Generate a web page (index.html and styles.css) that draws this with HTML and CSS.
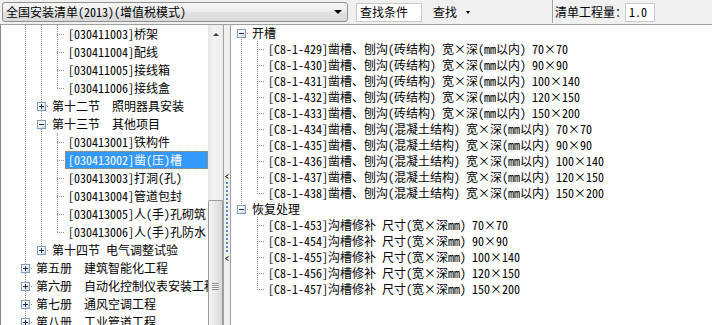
FILE: index.html
```html
<!DOCTYPE html>
<html lang="zh-CN">
<head>
  <meta charset="UTF-8">
  <title>清单</title>
  <link rel="stylesheet" href="styles.css">
</head>
<body>
  <div class="toolbar">
    <div class="combo">
      <span class="combo-text">全国安装清单(2013)(增值税模式)</span>
      <span class="down"></span>
    </div>
    <div class="search">查找条件</div>
    <div class="find">查找<span class="down small"></span></div>
    <div class="sep"></div>
    <div class="qty">
      <span class="qty-label">清单工程量：</span>
      <span class="qty-box">1.0</span>
    </div>
  </div>

  <div class="main">
    <div class="left">
      <div class="tree tall">
        <div class="row"><span class="c v"></span><span class="c v"></span><span class="c t"></span><span class="lbl">[030411003]桥架</span></div>
        <div class="row"><span class="c v"></span><span class="c v"></span><span class="c t"></span><span class="lbl">[030411004]配线</span></div>
        <div class="row"><span class="c v"></span><span class="c v"></span><span class="c t"></span><span class="lbl">[030411005]接线箱</span></div>
        <div class="row"><span class="c v"></span><span class="c v"></span><span class="c l"></span><span class="lbl">[030411006]接线盒</span></div>
        <div class="row"><span class="c v"></span><span class="c t"><i class="box plus"></i></span><span class="lbl">第十二节　照明器具安装</span></div>
        <div class="row"><span class="c v"></span><span class="c t"><i class="box"></i></span><span class="lbl">第十三节　其他项目</span></div>
        <div class="row"><span class="c v"></span><span class="c v"></span><span class="c t"></span><span class="lbl">[030413001]铁构件</span></div>
        <div class="row"><span class="c v"></span><span class="c v"></span><span class="c t"></span><span class="lbl sel">[030413002]凿(压)槽</span></div>
        <div class="row"><span class="c v"></span><span class="c v"></span><span class="c t"></span><span class="lbl">[030413003]打洞(孔)</span></div>
        <div class="row"><span class="c v"></span><span class="c v"></span><span class="c t"></span><span class="lbl">[030413004]管道包封</span></div>
        <div class="row"><span class="c v"></span><span class="c v"></span><span class="c t"></span><span class="lbl">[030413005]人(手)孔砌筑</span></div>
        <div class="row"><span class="c v"></span><span class="c v"></span><span class="c l"></span><span class="lbl">[030413006]人(手)孔防水</span></div>
        <div class="row"><span class="c v"></span><span class="c l"><i class="box plus"></i></span><span class="lbl">第十四节 电气调整试验</span></div>
        <div class="row"><span class="c t"><i class="box plus"></i></span><span class="lbl">第五册　建筑智能化工程</span></div>
        <div class="row"><span class="c t"><i class="box plus"></i></span><span class="lbl">第六册　自动化控制仪表安装工程</span></div>
        <div class="row"><span class="c t"><i class="box plus"></i></span><span class="lbl">第七册　通风空调工程</span></div>
        <div class="row"><span class="c t"><i class="box plus"></i></span><span class="lbl">第八册　工业管道工程</span></div>
      </div>
      <div class="vscroll">
        <div class="sbtn"><span class="up"></span></div>
        <div class="thumb"><span class="grip"></span></div>
      </div>
    </div>

    <div class="splitter">
      <svg class="chev" width="4" height="5" viewBox="0 0 4 5"><path d="M3.5 0.5 L0.5 2.5 L3.5 4.5" fill="none" stroke="#000" stroke-width="1"/></svg>
      <div class="grab"></div>
      <svg class="chev" width="4" height="5" viewBox="0 0 4 5"><path d="M3.5 0.5 L0.5 2.5 L3.5 4.5" fill="none" stroke="#000" stroke-width="1"/></svg>
    </div>

    <div class="right">
      <div class="tree short">
        <div class="row"><span class="c f"><i class="box"></i></span><span class="lbl">开槽</span></div>
        <div class="row"><span class="c v"></span><span class="c t"></span><span class="lbl">[C8-1-429]凿槽、刨沟(砖结构) 宽<b class="x">×</b>深(mm以内) 70<b class="x">×</b>70</span></div>
        <div class="row"><span class="c v"></span><span class="c t"></span><span class="lbl">[C8-1-430]凿槽、刨沟(砖结构) 宽<b class="x">×</b>深(mm以内) 90<b class="x">×</b>90</span></div>
        <div class="row"><span class="c v"></span><span class="c t"></span><span class="lbl">[C8-1-431]凿槽、刨沟(砖结构) 宽<b class="x">×</b>深(mm以内) 100<b class="x">×</b>140</span></div>
        <div class="row"><span class="c v"></span><span class="c t"></span><span class="lbl">[C8-1-432]凿槽、刨沟(砖结构) 宽<b class="x">×</b>深(mm以内) 120<b class="x">×</b>150</span></div>
        <div class="row"><span class="c v"></span><span class="c t"></span><span class="lbl">[C8-1-433]凿槽、刨沟(砖结构) 宽<b class="x">×</b>深(mm以内) 150<b class="x">×</b>200</span></div>
        <div class="row"><span class="c v"></span><span class="c t"></span><span class="lbl">[C8-1-434]凿槽、刨沟(混凝土结构) 宽<b class="x">×</b>深(mm以内) 70<b class="x">×</b>70</span></div>
        <div class="row"><span class="c v"></span><span class="c t"></span><span class="lbl">[C8-1-435]凿槽、刨沟(混凝土结构) 宽<b class="x">×</b>深(mm以内) 90<b class="x">×</b>90</span></div>
        <div class="row"><span class="c v"></span><span class="c t"></span><span class="lbl">[C8-1-436]凿槽、刨沟(混凝土结构) 宽<b class="x">×</b>深(mm以内) 100<b class="x">×</b>140</span></div>
        <div class="row"><span class="c v"></span><span class="c t"></span><span class="lbl">[C8-1-437]凿槽、刨沟(混凝土结构) 宽<b class="x">×</b>深(mm以内) 120<b class="x">×</b>150</span></div>
        <div class="row"><span class="c v"></span><span class="c l"></span><span class="lbl">[C8-1-438]凿槽、刨沟(混凝土结构) 宽<b class="x">×</b>深(mm以内) 150<b class="x">×</b>200</span></div>
        <div class="row"><span class="c l"><i class="box"></i></span><span class="lbl">恢复处理</span></div>
        <div class="row"><span class="c"></span><span class="c t"></span><span class="lbl">[C8-1-453]沟槽修补 尺寸(宽<b class="x">×</b>深mm) 70<b class="x">×</b>70</span></div>
        <div class="row"><span class="c"></span><span class="c t"></span><span class="lbl">[C8-1-454]沟槽修补 尺寸(宽<b class="x">×</b>深mm) 90<b class="x">×</b>90</span></div>
        <div class="row"><span class="c"></span><span class="c t"></span><span class="lbl">[C8-1-455]沟槽修补 尺寸(宽<b class="x">×</b>深mm) 100<b class="x">×</b>140</span></div>
        <div class="row"><span class="c"></span><span class="c t"></span><span class="lbl">[C8-1-456]沟槽修补 尺寸(宽<b class="x">×</b>深mm) 120<b class="x">×</b>150</span></div>
        <div class="row"><span class="c"></span><span class="c l"></span><span class="lbl">[C8-1-457]沟槽修补 尺寸(宽<b class="x">×</b>深mm) 150<b class="x">×</b>200</span></div>
      </div>
    </div>
  </div>
</body>
</html>
```

FILE: styles.css
```css
html, body {
    margin: 0;
    height: 100%;
}
body {
    width: 712px;
    height: 325px;
    overflow: hidden;
    display: flex;
    flex-direction: column;
    background-color: #f0f0f0;
    color: #000;
    font-family: "Noto Sans Mono CJK SC", "Noto Sans CJK SC", monospace;
    font-size: 12px;
    line-height: 1;
}

/* toolbar */
.toolbar {
    height: 24px;
    flex: none;
    display: flex;
    align-items: center;
    border-bottom: 1px solid #a0a0a0;
}
.combo {
    margin-left: 2px;
    width: 342px;
    height: 18px;
    display: flex;
    align-items: center;
    justify-content: space-between;
    padding: 0 5px 0 3px;
    box-sizing: content-box;
    width: 336px;
    border: 1px solid #8e8f8f;
    border-radius: 3px;
    background: linear-gradient(#f6f6f6, #ececec 50%, #e2e2e2 51%, #d9d9d9);
}
.down {
    width: 0;
    height: 0;
    border-left: 4px solid transparent;
    border-right: 4px solid transparent;
    border-top: 4px solid #000;
}
.down.small {
    margin-left: 9px;
    border-left-width: 2px;
    border-right-width: 2px;
    border-top-width: 3px;
}
.search {
    margin-left: 8px;
    width: 61px;
    height: 17px;
    padding-left: 3px;
    display: flex;
    align-items: center;
    background: #fff;
    border: 1px solid #c9c9c9;
}
.find {
    margin-left: 11px;
    width: 119px;
    display: flex;
    align-items: center;
}
.sep {
    align-self: flex-start;
    width: 1px;
    height: 23px;
    background: #a0a0a0;
    box-shadow: 1px 0 0 #fff;
}
.qty {
    margin-left: 2px;
    display: flex;
    align-items: center;
}
.qty-label {
    margin-right: -2px;
}
.qty-box {
    width: 25px;
    height: 17px;
    padding-left: 3px;
    display: flex;
    align-items: center;
    background: #fff;
    border: 1px solid #c9c9c9;
}

/* panels */
.main {
    flex: 1;
    display: flex;
    min-height: 0;
}
.left {
    width: 222px;
    flex: none;
    display: flex;
    background: #fff;
    border-left: 1px solid #828790;
    border-right: 1px solid #a0a0a0;
}
.splitter {
    width: 6px;
    flex: none;
    display: flex;
    flex-direction: column;
    align-items: center;
    padding-top: 149px;
    box-sizing: border-box;
}
.chev {
    display: block;
    flex: none;
}
.grab {
    margin: 3px 0 4px;
    width: 2px;
    height: 70px;
    background: repeating-linear-gradient(to bottom, #4f86da 0 2px, transparent 2px 4px);
}
.right {
    flex: 1;
    background: #fff;
    border-left: 1px solid #a0a0a0;
}

/* trees */
.tree {
    --dot: #8c8c8c;
    --vdot: repeating-linear-gradient(to bottom, var(--dot) 0 1px, transparent 1px 2px);
    --hdot: repeating-linear-gradient(to right, var(--dot) 0 1px, transparent 1px 2px);
    white-space: nowrap;
    overflow: hidden;
}
.tree.tall {
    width: 207px;
    padding-left: 16px;
    box-sizing: border-box;
    --h: 18px;
    --mid: 9px;
}
.tree.short {
    padding-left: 2px;
    --h: 16px;
    --mid: 8px;
}
.row {
    height: var(--h);
    display: flex;
    align-items: stretch;
}
.c {
    width: 16px;
    flex: none;
    display: flex;
    align-items: center;
    padding-left: 4px;
    box-sizing: border-box;
    background-repeat: no-repeat;
}
.c.v {
    background-image: var(--vdot);
    background-size: 1px 100%;
    background-position: 8px 0;
}
.c.t {
    background-image: var(--vdot), var(--hdot);
    background-size: 1px 100%, 8px 1px;
    background-position: 8px 0, 8px var(--mid);
}
.c.l {
    background-image: var(--vdot), var(--hdot);
    background-size: 1px var(--mid), 8px 1px;
    background-position: 8px 0, 8px var(--mid);
}
.c.f {
    background-image: var(--vdot), var(--hdot);
    background-size: 1px var(--mid), 8px 1px;
    background-position: 8px 100%, 8px var(--mid);
}
.box {
    width: 9px;
    height: 9px;
    box-sizing: border-box;
    border: 1px solid #7f9db9;
    background:
        linear-gradient(#1b2d4a, #1b2d4a) center / 5px 1px no-repeat,
        linear-gradient(135deg, #ffffff 30%, #cfd2d6);
}
.box.plus {
    background:
        linear-gradient(#1b2d4a, #1b2d4a) center / 5px 1px no-repeat,
        linear-gradient(#1b2d4a, #1b2d4a) center / 1px 5px no-repeat,
        linear-gradient(135deg, #ffffff 30%, #cfd2d6);
}
.lbl {
    flex: 1;
    display: flex;
    align-items: center;
    padding-left: 3px;
}
.lbl.sel {
    background: #3399ff;
    color: #fff;
    outline: 1px dotted #d08a3a;
    outline-offset: -1px;
}
.x {
    font-weight: normal;
    display: inline-block;
    width: 12px;
    text-align: center;
}

/* scrollbar */
.vscroll {
    width: 15px;
    flex: none;
    display: flex;
    flex-direction: column;
    background: linear-gradient(to right, #e6e6e6, #f3f3f3 40%, #ededed);
}
.sbtn {
    height: 17px;
    display: flex;
    justify-content: center;
    padding-top: 8px;
    box-sizing: border-box;
}
.up {
    width: 0;
    height: 0;
    border-left: 3px solid transparent;
    border-right: 3px solid transparent;
    border-bottom: 3px solid #3c3c3c;
}
.thumb {
    margin-top: 158px;
    flex: 1;
    border: 1px solid #9a9a9a;
    border-bottom: none;
    border-radius: 2px 2px 0 0;
    background: linear-gradient(to right, #f4f4f4, #e4e4e4 60%, #d8d8d8);
    display: flex;
    justify-content: center;
    padding-top: 82px;
}
.grip {
    width: 7px;
    height: 7px;
    background: repeating-linear-gradient(to bottom, #8a8a8a 0 1px, #fafafa 1px 2px);
}
```
